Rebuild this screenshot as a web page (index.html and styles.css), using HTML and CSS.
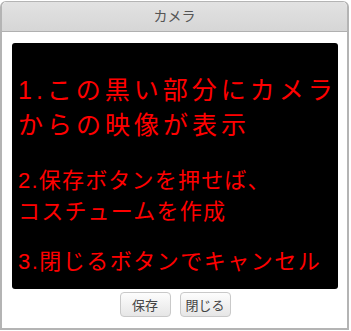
FILE: index.html
```html
<!DOCTYPE html>
<html lang="ja">
<head>
    <meta charset="UTF-8">
    <meta name="viewport" content="width=device-width, initial-scale=1.0">
    <title>カメラ</title>
    <link rel="stylesheet" href="styles.css">
</head>
<body>

    <div class="dialog">
        <!-- Title Bar -->
        <div class="dialog-title">カメラ</div>

        <div class="dialog-body">
            <!-- Camera preview area -->
            <div class="camera-view">
                <p class="hint hint-big">1.この黒い部分にカメラ<br>からの映像が表示</p>
                <p class="hint hint-mid">2.保存ボタンを押せば、<br>コスチュームを作成</p>
                <p class="hint hint-last">3.閉じるボタンでキャンセル</p>
            </div>

            <!-- Buttons -->
            <div class="dialog-buttons">
                <button class="btn">保存</button>
                <button class="btn">閉じる</button>
            </div>
        </div>
    </div>

</body>
</html>
```

FILE: styles.css
```css
/* Global Styles */
body {
    margin: 0;
    padding: 1px 0 0;
    background: #fff;
    font-family: 'Liberation Sans', 'Noto Sans CJK JP', sans-serif;
}

/* Dialog */
.dialog {
    width: 349px;
    height: 329px;
    box-sizing: border-box;
    border: 2px solid #b4b4b4;
    border-top-width: 1px;
    border-radius: 6px 6px 0 0;
    background: #fff;
    display: flex;
    flex-direction: column;
}

.dialog-title {
    height: 29px;
    line-height: 29px;
    text-align: center;
    font-size: 14px;
    color: #555;
    background: linear-gradient(#e2e2e2, #d6d6d6);
    border-bottom: 1px solid #b0b0b0;
    border-radius: 5px 5px 0 0;
}

.dialog-body {
    padding: 11px 9px 0 10px;
}

/* Camera preview */
.camera-view {
    height: 246px;
    box-sizing: border-box;
    background: #000;
    border-radius: 3px;
    padding: 30px 0 0 6px;
    color: #f00;
    white-space: nowrap;
}

.hint {
    margin: 0;
}

.hint-big {
    font-size: 25px;
    line-height: 35px;
    letter-spacing: 4px;
}

.hint-mid {
    margin-top: 22px;
    font-size: 22px;
    line-height: 31px;
    letter-spacing: 1.2px;
}

.hint-last {
    margin-top: 19px;
    font-size: 22px;
    line-height: 31px;
    letter-spacing: 1.5px;
}

/* Buttons */
.dialog-buttons {
    display: flex;
    justify-content: center;
    gap: 9px;
    margin-top: 3px;
}

.btn {
    width: 51px;
    height: 25px;
    padding: 0;
    font-family: inherit;
    font-size: 13px;
    color: #444;
    background: linear-gradient(#fdfdfd, #e6e6e6);
    border: 1px solid #c9c9c9;
    border-radius: 4px;
    cursor: pointer;
}
```
